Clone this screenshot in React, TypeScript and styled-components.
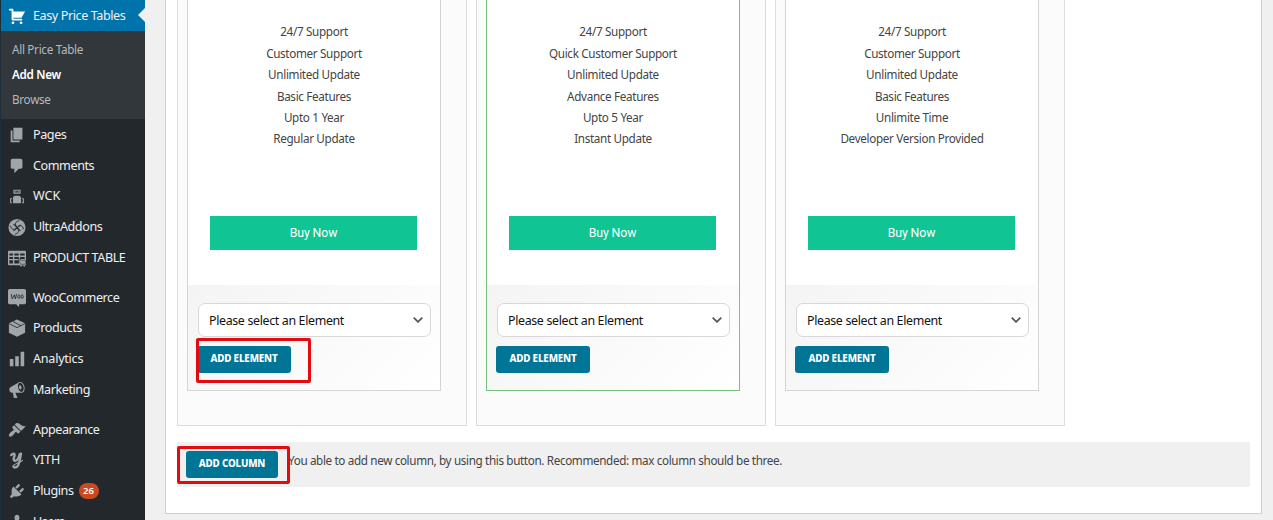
import React from "react";
import styled, { createGlobalStyle } from "styled-components";

const GlobalStyle = createGlobalStyle`
    * {
        box-sizing: border-box;
    }

    body {
        margin: 0;
        height: 520px;
        overflow: hidden;
        background: #f0f0f0;
        font-family: "Noto Sans", "Open Sans", sans-serif;
        color: #444;
    }
`;

interface MenuEntry {
    label: string;
    icon: React.ReactNode;
    spacing?: number;
    count?: number;
}

interface PriceColumn {
    features: string[];
    featured?: boolean;
}

const CartIcon = () => (
    <path d="M6 13h9c.55 0 1 .45 1 1s-.45 1-1 1H5c-.55 0-1-.45-1-1V4H2c-.55 0-1-.45-1-1s.45-1 1-1h3c.55 0 1 .45 1 1v2h13l-4 7H6v1zm-.5 3c.83 0 1.5.67 1.5 1.5S6.33 19 5.5 19 4 18.33 4 17.5 4.67 16 5.5 16zm9 0c.83 0 1.5.67 1.5 1.5s-.67 1.5-1.5 1.5-1.5-.67-1.5-1.5.67-1.5 1.5-1.5z" />
);

const WckIcon = () => (
    <>
        <path fillRule="evenodd" d="M6 3h8v4.500H6zM7.200 4.200v2h5.600v-2z" />
        <path d="M8 4.600h1.300v1.200H8zM10.700 4.600H12v1.200h-1.300zM5.500 12.500c0-1.700 1-2.700 2.500-2.700h4c1.500 0 2.500 1 2.500 2.700V18h-9zM2.300 14c0-1.200.8-2 2-2v1.500h-.8V17h.8v1h-2zM17.700 14c0-1.200-.8-2-2-2v1.500h.8V17h-.8v1h2z" />
    </>
);

const UltraIcon = () => (
    <>
        <circle cx="10" cy="10.5" r="9.5" />
        <g fill="none" stroke="#23282d" strokeWidth="1" strokeLinecap="round">
            <path d="M9.500 9.500C7 7 8 4 12 3M11 9.500C13.500 7 16.500 8.500 17.200 12M10.500 11.500C13 14 12 17 8 18M9 11.500C6.500 14 3.500 12.500 2.800 9" />
            <path d="M6.500 7l7 7M13.500 8l-7 6" strokeWidth="1.200" />
        </g>
    </>
);

const TableIcon = () => (
    <>
        <path
            fillRule="evenodd"
            d="M1 2h18a1 1 0 0 1 1 1v14a1 1 0 0 1-1 1H1a1 1 0 0 1-1-1V3a1 1 0 0 1 1-1zM1.5 5v2.3h4V5zM7 5v2.3h5V5zM13.5 5v2.3h5V5zM1.5 8.8V11h4V8.8zM7 8.8V11h5V8.8zM13.5 8.8V11h5V8.8zM1.5 12.5V16h4v-3.5zM7 12.5V16h5v-3.5z"
        />
        <path d="M11.5 11h2l.5 1.5h6l-1 4.5h-5z" stroke="#23282d" strokeWidth=".6" />
        <circle cx="14.5" cy="18.5" r="1" />
        <circle cx="18" cy="18.5" r="1" />
    </>
);

const WooIcon = () => (
    <>
        <path d="M2 0h16c1.2 0 2 .8 2 2v13c0 1.2-.8 2-2 2h-5.500l-.4 3-3-3H2c-1.200 0-2-.8-2-2V2c0-1.200.8-2 2-2z" />
        <g fill="none" stroke="#23282d" strokeWidth=".9">
            <path d="M3.500 5.500l1.200 5.500L7 6.500 8.200 11 9.500 5.500" />
            <ellipse cx="12" cy="8.5" rx="1.2" ry="2" />
            <ellipse cx="15.700" cy="8.500" rx="1.200" ry="2" />
        </g>
    </>
);

const ProductsIcon = () => (
    <>
        <path d="M10 .5l9 4.300v10.400l-9 4.600-9-4.600V4.800z" />
        <path d="M1 5l9 4.600L19 5M5.500 2.800l9 4.700" fill="none" stroke="#23282d" strokeWidth=".9" />
    </>
);

const YithIcon = () => (
    <g fill="none" stroke="currentColor" strokeLinecap="round" strokeLinejoin="round">
        <path d="M3.500 4.500C5.500 2.500 7.800 2.500 7.300 5 6.800 7.500 5 10.500 7.500 10.800c2.500.2 4.500-3 5.500-7.300" strokeWidth="2.600" />
        <path d="M14.500 2.800c-1 4.700-1.500 9.200-3 12.700-1.500 3.200-5.500 3.700-5.500 1.500" strokeWidth="2.600" />
        <path d="M6 16.500c0-2 5.500-2.500 10-6" strokeWidth="1.300" />
    </g>
);

const firstGroup: MenuEntry[] = [
    { label: "Pages", icon: <path d="M6 15V2h10v13H6zm-1 1h8v2H3V5h2v11z" /> },
    {
        label: "Comments",
        icon: <path d="M5 2h9c1.1 0 2 .9 2 2v7c0 1.1-.9 2-2 2h-2l-5 5v-5H5c-1.1 0-2-.9-2-2V4c0-1.1.9-2 2-2z" />,
    },
    { label: "WCK", spacing: 0, icon: <WckIcon /> },
    { label: "UltraAddons", icon: <UltraIcon /> },
    { label: "PRODUCT TABLE", icon: <TableIcon /> },
];

const shopGroup: MenuEntry[] = [
    { label: "WooCommerce", icon: <WooIcon /> },
    { label: "Products", icon: <ProductsIcon /> },
    { label: "Analytics", spacing: -0.25, icon: <path d="M18 18V2h-4v16h4zm-6 0V7H8v11h4zm-6 0v-8H2v8h4z" /> },
    {
        label: "Marketing",
        icon: (
            <path d="M18.15 5.94c.46 1.62.38 3.22-.02 4.48-.42 1.28-1.26 2.18-2.3 2.48-.16.06-.26.06-.4.06-.06.02-.12.02-.18.02-.06.02-.14.02-.22.02h-6.8l2.22 5.5c.02.14-.06.26-.14.34-.08.1-.24.16-.34.16H6.95c-.1 0-.26-.06-.34-.16-.08-.08-.16-.2-.14-.34l-1-5.5H4.25l-.02-.02c-.5.06-1.08-.18-1.54-.62s-.88-1.08-1.06-1.88c-.24-.8-.2-1.56-.02-2.2.18-.62.58-1.08 1.06-1.3l.02-.02 9-5.4c.1-.06.18-.1.24-.16.06-.04.14-.08.24-.12.16-.08.28-.12.5-.18 1.04-.3 2.24.1 3.22.98s1.84 2.24 2.26 3.86zm-2.58 5.98h-.02c.4-.1.74-.34 1.04-.7.58-.7.86-1.76.86-3.04 0-.64-.1-1.3-.28-1.98-.34-1.36-1.02-2.5-1.78-3.24s-1.68-1.1-2.46-.88c-.82.22-1.4.96-1.7 2-.32 1.04-.28 2.36.06 3.72.38 1.36 1 2.5 1.8 3.24.78.74 1.62 1.1 2.48.88zm-2.54-7.08c.22-.04.42-.02.62.04.38.16.76.48 1.02 1s.42 1.2.42 1.78c0 .3-.04.56-.12.8-.18.48-.44.84-.86.94-.34.1-.8-.06-1.14-.4s-.64-.86-.78-1.5c-.18-.62-.12-1.24.02-1.72s.48-.84.82-.94z" />
        ),
    },
];

const systemGroup: MenuEntry[] = [
    {
        label: "Appearance",
        icon: (
            <path d="M14.48 11.06L7.41 3.99l1.5-1.5c.5-.56 2.3-.47 3.51.32 1.21.8 1.43 1.28 2.91 2.1 1.18.64 2.45 1.26 4.45.85zm-.71.71L6.7 4.7 4.93 6.47c-.39.39-.39 1.02 0 1.41l1.06 1.06c.39.39.39 1.03 0 1.42-.6.6-1.43 1.11-2.21 1.69-.35.26-.7.53-1.01.84C1.43 14.23.4 16.08 1.4 17.07c.99 1 2.84-.03 4.18-1.36.31-.31.58-.66.85-1.02.57-.78 1.08-1.61 1.69-2.21.39-.39 1.02-.39 1.41 0l1.06 1.06c.39.39 1.02.39 1.41 0z" />
        ),
    },
    { label: "YITH", spacing: -0.1, icon: <YithIcon /> },
    {
        label: "Plugins",
        count: 26,
        icon: (
            <path d="M13.11 4.36L9.87 7.6 8 5.73l3.24-3.24c.35-.34 1.05-.2 1.56.32.52.51.66 1.21.31 1.55zm-8 1.77l.91-1.12 9.01 9.01-1.19.84c-.71.71-2.63 1.16-3.82 1.16H6.14L4.9 17.26c-.59.59-1.54.59-2.12 0-.59-.58-.59-1.53 0-2.12l1.24-1.24v-3.88c0-1.13.4-3.19 1.09-3.89zm7.26 3.97l3.24-3.24c.34-.35 1.04-.21 1.55.31.52.51.66 1.21.31 1.55l-3.24 3.25z" />
        ),
    },
    {
        label: "Users",
        icon: (
            <path d="M10 9.25c-2.27 0-2.73-3.44-2.73-3.44C7 4.02 7.82 2 9.97 2c2.16 0 2.98 2.02 2.71 3.81 0 0-.41 3.44-2.68 3.44zm0 2.57L12.72 10c2.39 0 4.52 2.33 4.52 4.53v2.49s-3.65 1.13-7.24 1.13c-3.65 0-7.24-1.13-7.24-1.13v-2.49c0-2.25 1.94-4.48 4.47-4.48z" />
        ),
    },
];

const columns: PriceColumn[] = [
    { features: ["24/7 Support", "Customer Support", "Unlimited Update", "Basic Features", "Upto 1 Year", "Regular Update"] },
    {
        features: ["24/7 Support", "Quick Customer Support", "Unlimited Update", "Advance Features", "Upto 5 Year", "Instant Update"],
        featured: true,
    },
    {
        features: ["24/7 Support", "Customer Support", "Unlimited Update", "Basic Features", "Unlimite Time", "Developer Version Provided"],
    },
];

const MenuGroup: React.FC<{ entries: MenuEntry[] }> = ({ entries }) => (
    <Group>
        {entries.map((entry) => (
            <MenuItem key={entry.label}>
                <MenuIcon viewBox="0 0 20 20">{entry.icon}</MenuIcon>
                <MenuLabel $spacing={entry.spacing}>{entry.label}</MenuLabel>
                {entry.count && <CountBadge>{entry.count}</CountBadge>}
            </MenuItem>
        ))}
    </Group>
);

const Column: React.FC<{ column: PriceColumn; marked: boolean }> = ({ column, marked }) => (
    <ColumnBox>
        <PriceCard $featured={column.featured}>
            <FeatureList>
                {column.features.map((feature) => (
                    <Feature key={feature}>{feature}</Feature>
                ))}
            </FeatureList>
            <BuyButton>Buy Now</BuyButton>
            <ElementPanel>
                <ElementSelect>
                    <span>Please select an Element</span>
                    <Chevron viewBox="0 0 10 6">
                        <path d="M.7.7L5 4.9 9.3.7" />
                    </Chevron>
                </ElementSelect>
                <ButtonSlot>
                    <ActionButton $width={94}>ADD ELEMENT</ActionButton>
                    {marked && <Marker $top={-8} $left={-1} $width={115} $height={45} />}
                </ButtonSlot>
            </ElementPanel>
        </PriceCard>
    </ColumnBox>
);

const App: React.FC = () => {
    return (
        <Page>
            <GlobalStyle />
            <Sidebar>
                <CurrentItem>
                    <MenuIcon viewBox="0 0 20 20">
                        <CartIcon />
                    </MenuIcon>
                    <MenuLabel>Easy Price Tables</MenuLabel>
                </CurrentItem>
                <SubMenu>
                    <SubItem>All Price Table</SubItem>
                    <SubItem $current>Add New</SubItem>
                    <SubItem>Browse</SubItem>
                </SubMenu>
                <MenuGroup entries={firstGroup} />
                <MenuGroup entries={shopGroup} />
                <MenuGroup entries={systemGroup} />
            </Sidebar>
            <Content>
                <Columns>
                    {columns.map((column, index) => (
                        <Column key={index} column={column} marked={index === 0} />
                    ))}
                </Columns>
                <AddColumnBar>
                    <ButtonSlot>
                        <ActionButton $width={92}>ADD COLUMN</ActionButton>
                        <Marker $top={-5} $left={-9} $width={113} $height={38} />
                    </ButtonSlot>
                    <Hint>You able to add new column, by using this button. Recommended: max column should be three.</Hint>
                </AddColumnBar>
            </Content>
        </Page>
    );
};

export default App;

const Page = styled.div`
    display: flex;
    align-items: flex-start;
    height: 520px;
    overflow: hidden;
`;

const Sidebar = styled.nav`
    flex: none;
    width: 145px;
    height: 520px;
    overflow: hidden;
    border-left: 1px solid #1f2f3a;
    background: #23282d;
`;

const MenuItem = styled.div`
    display: flex;
    align-items: center;
    height: 30.75px;
    padding-left: 7px;
    color: #a0a5aa;
`;

const CurrentItem = styled(MenuItem)`
    position: relative;
    height: 31px;
    background: #0073aa;
    color: #fff;

    &::after {
        content: "";
        position: absolute;
        right: 0;
        top: 8px;
        border: solid transparent;
        border-width: 7.5px 7px 7.5px 0;
        border-right-color: #f0f0f0;
    }
`;

const MenuIcon = styled.svg`
    flex: none;
    width: 18px;
    height: 18px;
    margin-right: 7px;
    fill: currentColor;
`;

const MenuLabel = styled.span<{ $spacing?: number }>`
    font-size: 12.6px;
    line-height: 18px;
    letter-spacing: ${(props) => props.$spacing ?? -0.42}px;
    color: #f0f0f0;
    white-space: nowrap;
`;

const CountBadge = styled.span`
    width: 20px;
    height: 16px;
    margin-left: 5px;
    border-radius: 8px;
    background: #ca4a1f;
    color: #fff;
    font-size: 9.5px;
    font-weight: 600;
    line-height: 16px;
    text-align: center;
`;

const SubMenu = styled.div`
    height: 88px;
    padding: 5.5px 0 0 11px;
    background: #32373c;
`;

const SubItem = styled.div<{ $current?: boolean }>`
    height: 25px;
    font-size: 11.7px;
    font-weight: ${(props) => (props.$current ? 600 : 400)};
    line-height: 25px;
    letter-spacing: -0.3px;
    color: ${(props) => (props.$current ? "#fff" : "#b4b9be")};
`;

const Group = styled.div`
    padding-top: 0.6px;
    margin-bottom: 8.4px;
`;

const Content = styled.main`
    width: 1097px;
    height: 514px;
    margin-left: 20px;
    padding: 0 11px;
    border: 1px solid #ccd0d4;
    border-top: 0;
    background: #fff;
`;

const Columns = styled.div`
    display: flex;
    gap: 9px;
`;

const ColumnBox = styled.section`
    width: 290px;
    height: 426px;
    padding-left: 9px;
    border: 1px solid #ddd;
    border-top: 0;
    background: #fbfbfb;
`;

const PriceCard = styled.div<{ $featured?: boolean }>`
    display: flex;
    flex-direction: column;
    width: 254px;
    height: 391px;
    border: 1px solid ${(props) => (props.$featured ? "#7cbf80" : "#d5d5d5")};
    border-top: 0;
    background: #fff;
`;

const FeatureList = styled.ul`
    height: 216px;
    margin: 0;
    padding: 21.4px 0 0;
    list-style: none;
`;

const Feature = styled.li`
    height: 21.4px;
    font-size: 11.7px;
    line-height: 21.4px;
    letter-spacing: -0.33px;
    text-align: center;
    color: #444;
`;

const BuyButton = styled.div`
    height: 34px;
    margin: 0 23px 35px 22px;
    background: #11c493;
    color: #fff;
    font-family: Roboto, sans-serif;
    font-size: 12.3px;
    line-height: 34px;
    letter-spacing: -0.1px;
    text-align: center;
`;

const ElementPanel = styled.div`
    flex: 1;
    padding: 18px 9px 0;
    background: linear-gradient(135deg, #f4f4f4, #fff);
`;

const ElementSelect = styled.div`
    display: flex;
    align-items: center;
    justify-content: space-between;
    width: 233px;
    height: 34px;
    margin-left: 1px;
    padding: 0 7px 0 10px;
    border: 1px solid #d8d8d8;
    border-radius: 7px;
    background: #fff;
    color: #111;
    font-size: 12.4px;
    letter-spacing: -0.34px;
`;

const Chevron = styled.svg`
    width: 10px;
    height: 6px;
    fill: none;
    stroke: #555;
    stroke-width: 1.7;
`;

const ButtonSlot = styled.div`
    position: relative;
    flex: none;

    ${ElementSelect} + & {
        margin-top: 9px;
    }
`;

const ActionButton = styled.div<{ $width: number }>`
    width: ${(props) => props.$width}px;
    height: 27px;
    border-radius: 3px;
    background: #007595;
    color: #fff;
    font-size: 9.8px;
    font-weight: 800;
    line-height: 25px;
    letter-spacing: -0.15px;
    text-align: center;
`;

/* Red highlight drawn over the button it points at */
const Marker = styled.div<{ $top: number; $left: number; $width: number; $height: number }>`
    position: absolute;
    top: ${(props) => props.$top}px;
    left: ${(props) => props.$left}px;
    width: ${(props) => props.$width}px;
    height: ${(props) => props.$height}px;
    border: 3px solid #e30b10;
    border-radius: 2px;
`;

const AddColumnBar = styled.div`
    display: flex;
    height: 45px;
    margin-top: 16px;
    padding: 9px 9px 0;
    background: #f0f0f0;
`;

const Hint = styled.p`
    margin: 0 0 0 10px;
    font-size: 11.7px;
    line-height: 18px;
    letter-spacing: -0.36px;
    color: #444;
    white-space: nowrap;
`;
